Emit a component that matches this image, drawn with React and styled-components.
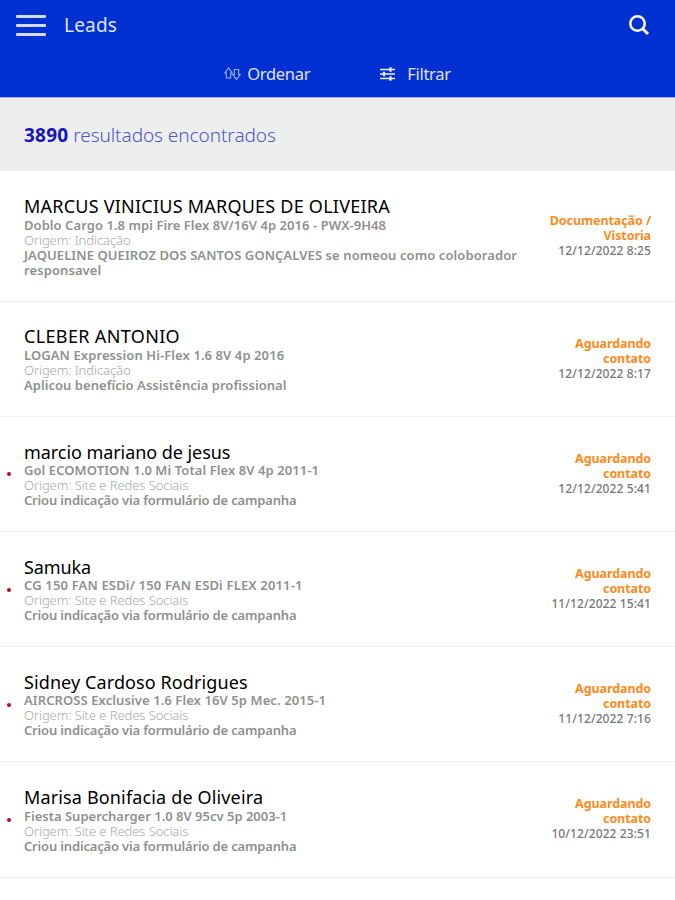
import React from "react";
import styled, { createGlobalStyle } from "styled-components";

// tracking = letter spacing in px for [name, vehicle, activity]
const leads = [
  {
    name: "MARCUS VINICIUS MARQUES DE OLIVEIRA",
    vehicle: "Doblo Cargo 1.8 mpi Fire Flex 8V/16V 4p 2016 - PWX-9H48",
    origin: "Indicação",
    activity:
      "JAQUELINE QUEIROZ DOS SANTOS GONÇALVES se nomeou como coloborador\nresponsavel",
    status: "Documentação /\nVistoria",
    date: "12/12/2022 8:25",
    tracking: [0.23, 0.06, 0.09],
  },
  {
    name: "CLEBER ANTONIO",
    vehicle: "LOGAN Expression Hi-Flex 1.6 8V 4p 2016",
    origin: "Indicação",
    activity: "Aplicou benefício Assistência profissional",
    status: "Aguardando\ncontato",
    date: "12/12/2022 8:17",
    tracking: [0.35, 0.09, 0.05],
  },
  {
    name: "marcio mariano de jesus",
    vehicle: "Gol ECOMOTION 1.0 Mi Total Flex 8V 4p 2011-1",
    origin: "Site e Redes Sociais",
    activity: "Criou indicação via formulário de campanha",
    status: "Aguardando\ncontato",
    date: "12/12/2022 5:41",
    unread: true,
    tracking: [-0.06, 0.08, -0.17],
  },
  {
    name: "Samuka",
    vehicle: "CG 150 FAN ESDi/ 150 FAN ESDi FLEX 2011-1",
    origin: "Site e Redes Sociais",
    activity: "Criou indicação via formulário de campanha",
    status: "Aguardando\ncontato",
    date: "11/12/2022 15:41",
    unread: true,
    tracking: [-0.1, 0.16, -0.17],
  },
  {
    name: "Sidney Cardoso Rodrigues",
    vehicle: "AIRCROSS Exclusive 1.6 Flex 16V 5p Mec. 2015-1",
    origin: "Site e Redes Sociais",
    activity: "Criou indicação via formulário de campanha",
    status: "Aguardando\ncontato",
    date: "11/12/2022 7:16",
    unread: true,
    tracking: [0.1, 0.09, -0.17],
  },
  {
    name: "Marisa Bonifacia de Oliveira",
    vehicle: "Fiesta Supercharger 1.0 8V 95cv 5p 2003-1",
    origin: "Site e Redes Sociais",
    activity: "Criou indicação via formulário de campanha",
    status: "Aguardando\ncontato",
    date: "10/12/2022 23:51",
    unread: true,
    tracking: [0.15, 0, -0.17],
  },
];

const SortIcon = () => (
  <svg width="17" height="15" viewBox="0 0 17 15" fill="none" stroke="#a3b1fb" strokeWidth="1.1">
    <path d="M.8 7 4.500 2 8.200 7H6.700V12H2.300V7Z" />
    <path d="M16.200 8.500 12.500 13.500 8.800 8.500h1.500V3.500h4.400v5Z" />
  </svg>
);

const FilterIcon = () => (
  <svg width="15" height="14" viewBox="0 0 15 14" stroke="#f0f1ff" strokeWidth="1.6">
    <path d="M0 2.500h15M0 7h15M0 11.500h15" />
    <path d="M10.500 .3v4.400M4 4.800v4.400M10.500 9.300v4.400" strokeWidth="2.200" />
  </svg>
);

const SearchIcon = () => (
  <svg width="22" height="22" viewBox="0 0 22 22" fill="none" stroke="#f6f6ff">
    <circle cx="9.500" cy="9.500" r="7.200" strokeWidth="2.600" />
    <path d="m15 15 5 5" strokeWidth="3" />
  </svg>
);

const App = () => {
  return (
    <Page>
      <GlobalStyle />
      <Header>
        <TitleBar>
          <MenuButton aria-label="menu">
            <span />
            <span />
            <span />
          </MenuButton>
          <Title>Leads</Title>
          <SearchButton aria-label="search">
            <SearchIcon />
          </SearchButton>
        </TitleBar>
        <Toolbar>
          <ToolButton $gap="6px">
            <SortIcon />
            Ordenar
          </ToolButton>
          <ToolButton $gap="12px">
            <FilterIcon />
            Filtrar
          </ToolButton>
        </Toolbar>
      </Header>
      <Results>
        <b>3890</b> resultados encontrados
      </Results>
      {leads.map((lead) => (
        <LeadRow key={lead.name}>
          <Marker>{lead.unread ? <Dot /> : ""}</Marker>
          <Info>
            <Name $tracking={lead.tracking[0]}>{lead.name}</Name>
            <Line $tracking={lead.tracking[1]}>{lead.vehicle}</Line>
            <Origin $tracking={-0.08}>Origem: {lead.origin}</Origin>
            <Line $tracking={lead.tracking[2]}>{lead.activity}</Line>
          </Info>
          <Side>
            <Status>{lead.status}</Status>
            <DateText>{lead.date}</DateText>
          </Side>
        </LeadRow>
      ))}
    </Page>
  );
};
export default App;

const GlobalStyle = createGlobalStyle`
  * {
    box-sizing: border-box;
  }
  body {
    margin: 0;
    background: #fff;
    overflow: hidden;
  }
`;
const Page = styled.div`
  width: 675px;
  height: 900px;
  overflow: hidden;
  font-family: "Noto Sans", sans-serif;
  background: #fff;
`;
const Header = styled.header`
  display: flex;
  flex-direction: column;
  height: 98px;
  background: #002fd2;
  border-bottom: 1px solid #a9aaf0;
  color: #e0e3ff;
`;
const TitleBar = styled.div`
  display: flex;
  align-items: center;
  height: 50px;
  padding: 0 25px 0 16px;
`;
const MenuButton = styled.button`
  display: flex;
  flex-direction: column;
  justify-content: space-between;
  width: 30px;
  height: 21px;
  padding: 0;
  border: none;
  background: none;
  & span {
    height: 3px;
    border-radius: 1px;
    background: #d5daff;
  }
`;
const Title = styled.div`
  flex: 1;
  margin-left: 18px;
  font-size: 19px;
  letter-spacing: 0.2px;
`;
const SearchButton = styled.button`
  display: flex;
  padding: 0;
  border: none;
  background: none;
`;
const Toolbar = styled.div`
  display: flex;
  justify-content: center;
  gap: 70px;
  height: 47px;
`;
const ToolButton = styled.button`
  display: flex;
  align-items: center;
  gap: ${(props) => props.$gap};
  padding: 0;
  border: none;
  background: none;
  color: #e0e3ff;
  font-family: inherit;
  font-size: 16.5px;
  letter-spacing: -0.3px;
`;
const Results = styled.div`
  height: 73.4px;
  padding-left: 24px;
  line-height: 74px;
  font-size: 19px;
  font-weight: 300;
  letter-spacing: -0.06px;
  color: #4a57c8;
  background: #eeeeee;
  & b {
    font-weight: 700;
    letter-spacing: 0.2px;
    color: #1414c0;
  }
`;
const LeadRow = styled.div`
  display: flex;
  align-items: center;
  padding: 23.8px 24px 22.9px 0;
  border-bottom: 1px solid #f2f2f2;
`;
const Marker = styled.div`
  display: flex;
  width: 24px;
  padding-left: 7px;
`;
const Dot = styled.div`
  width: 4px;
  height: 4px;
  border-radius: 50%;
  background: #d00018;
`;
const Info = styled.div`
  flex: 1;
  white-space: pre;
`;
const Name = styled.div`
  font-size: 18px;
  line-height: 22.5px;
  letter-spacing: ${(props) => props.$tracking}px;
  color: #000;
`;
const Line = styled.div`
  font-size: 13px;
  line-height: 15px;
  font-weight: 600;
  letter-spacing: ${(props) => props.$tracking}px;
  color: #8f8f8f;
`;
const Origin = styled(Line)`
  font-weight: 300;
  color: #a8a8a8;
`;
const Side = styled.div`
  width: 110px;
  padding-bottom: 2px;
  white-space: pre;
  text-align: right;
  font-size: 12px;
  line-height: 15px;
`;
const Status = styled.div`
  font-size: 12.5px;
  font-weight: 700;
  letter-spacing: -0.08px;
  color: #ff8a1c;
`;
const DateText = styled.div`
  font-weight: 500;
  letter-spacing: 0.1px;
  color: #777;
`;
